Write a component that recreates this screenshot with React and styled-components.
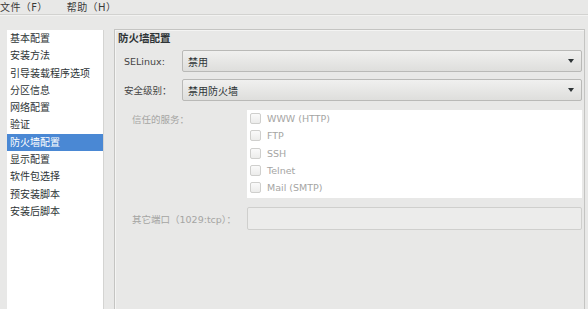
import React from "react";
import styled, { createGlobalStyle } from "styled-components";

const Global = createGlobalStyle`
  html, body { margin: 0; padding: 0; }
  body {
    background: #e8e8e7;
    font-family: "DejaVu Sans", "Noto Sans CJK SC", sans-serif;
    color: #2e3436;
    width: 588px;
    height: 309px;
    overflow: hidden;
  }
`;

const Window = styled.div`
  width: 588px;
  height: 309px;
  display: flex;
  flex-direction: column;
  background: #e8e8e7;
  overflow: hidden;
`;

const MenuBar = styled.div`
  height: 14px;
  display: flex;
  align-items: center;
  gap: 19px;
  font-size: 10px;
  color: #3a3a3a;
  border-bottom: 1px solid #d2d2d0;
  box-shadow: 0 1px 0 #f2f2f1;
`;

const MenuItem = styled.span`
  white-space: nowrap;
  margin-top: -2px;
  letter-spacing: 0.4px;
`;

const Body = styled.div`
  flex: 1;
  display: flex;
  padding: 14px 3px 0 7px;
  gap: 10px;
  min-height: 0;
`;

const NavList = styled.ul`
  list-style: none;
  margin: 1px 0 0;
  padding: 0;
  width: 96px;
  background: #fff;
  border-right: 1px solid #d4d4d2;
  font-size: 10px;
`;

const NavItem = styled.li`
  height: 17.3px;
  line-height: 17.3px;
  padding-left: 3px;
  white-space: nowrap;
  background: ${(p) => (p.$active ? "#4a88d4" : "transparent")};
  color: ${(p) => (p.$active ? "#fff" : "#2e3436")};
`;

const Frame = styled.section`
  flex: 1;
  border: 1px solid #c4c4c2;
  border-bottom: none;
  box-shadow: inset 1px 1px 0 #f4f4f3;
  display: flex;
  flex-direction: column;
`;

const FrameTitle = styled.h2`
  margin: 0;
  padding: 2px 0 0 3px;
  height: 16px;
  font-size: 10.5px;
  font-weight: bold;
  line-height: 13px;
  color: #2e3436;
`;

const TopGrid = styled.div`
  display: grid;
  grid-template-columns: 58px 1fr;
  row-gap: 7px;
  align-items: center;
  padding: 2px 2px 0 9px;
`;

const Label = styled.span`
  font-size: 9.5px;
  white-space: nowrap;
  color: ${(p) => (p.$disabled ? "#a5a5a3" : "#444")};
`;

const Combo = styled.div`
  height: 20px;
  border: 1px solid #b9b9b7;
  border-radius: 2px;
  background: linear-gradient(#f0f0ef, #dededc);
  display: flex;
  align-items: center;
  justify-content: space-between;
  padding: 0 7px 0 5px;
  font-size: 10px;
  color: #2e3436;
`;

const Arrow = styled.span`
  width: 0;
  height: 0;
  border-left: 3px solid transparent;
  border-right: 3px solid transparent;
  border-top: 4px solid #2e3436;
`;

const BottomGrid = styled.div`
  display: grid;
  grid-template-columns: 115px 1fr;
  row-gap: 9px;
  padding: 9px 2px 0 17px;
`;

const TopLabel = styled(Label)`
  padding-top: 2px;
`;

const CenterLabel = styled(Label)`
  align-self: center;
`;

const ServiceBox = styled.div`
  background: #fff;
  height: 88px;
  display: flex;
  flex-direction: column;
`;

const Service = styled.label`
  height: 17.3px;
  display: flex;
  align-items: center;
  gap: 6px;
  padding-left: 3px;
  font-size: 9.5px;
  color: #a5a5a3;
`;

const Box = styled.span`
  width: 9px;
  height: 9px;
  border: 1px solid #cfcfcd;
  border-radius: 2px;
  background: linear-gradient(#fafafa, #ececeb);
`;

const Input = styled.div`
  height: 21px;
  border: 1px solid #cfcfcd;
  border-radius: 2px;
  background: #ececeb;
`;

const nav = [
  "基本配置",
  "安装方法",
  "引导装载程序选项",
  "分区信息",
  "网络配置",
  "验证",
  "防火墙配置",
  "显示配置",
  "软件包选择",
  "预安装脚本",
  "安装后脚本",
];

const services = ["WWW (HTTP)", "FTP", "SSH", "Telnet", "Mail (SMTP)"];

export default function App() {
  return (
    <Window>
      <Global />
      <MenuBar>
        <MenuItem>文件（F）</MenuItem>
        <MenuItem>帮助（H）</MenuItem>
      </MenuBar>
      <Body>
        <NavList>
          {nav.map((n) => (
            <NavItem key={n} $active={n === "防火墙配置"}>
              {n}
            </NavItem>
          ))}
        </NavList>
        <Frame>
          <FrameTitle>防火墙配置</FrameTitle>
          <TopGrid>
            <Label>SELinux:</Label>
            <Combo>
              <span>禁用</span>
              <Arrow />
            </Combo>
            <Label>安全级别：</Label>
            <Combo>
              <span>禁用防火墙</span>
              <Arrow />
            </Combo>
          </TopGrid>
          <BottomGrid>
            <TopLabel $disabled>信任的服务：</TopLabel>
            <ServiceBox>
              {services.map((s) => (
                <Service key={s}>
                  <Box />
                  {s}
                </Service>
              ))}
            </ServiceBox>
            <CenterLabel $disabled>其它端口（1029:tcp）：</CenterLabel>
            <Input />
          </BottomGrid>
        </Frame>
      </Body>
    </Window>
  );
}
